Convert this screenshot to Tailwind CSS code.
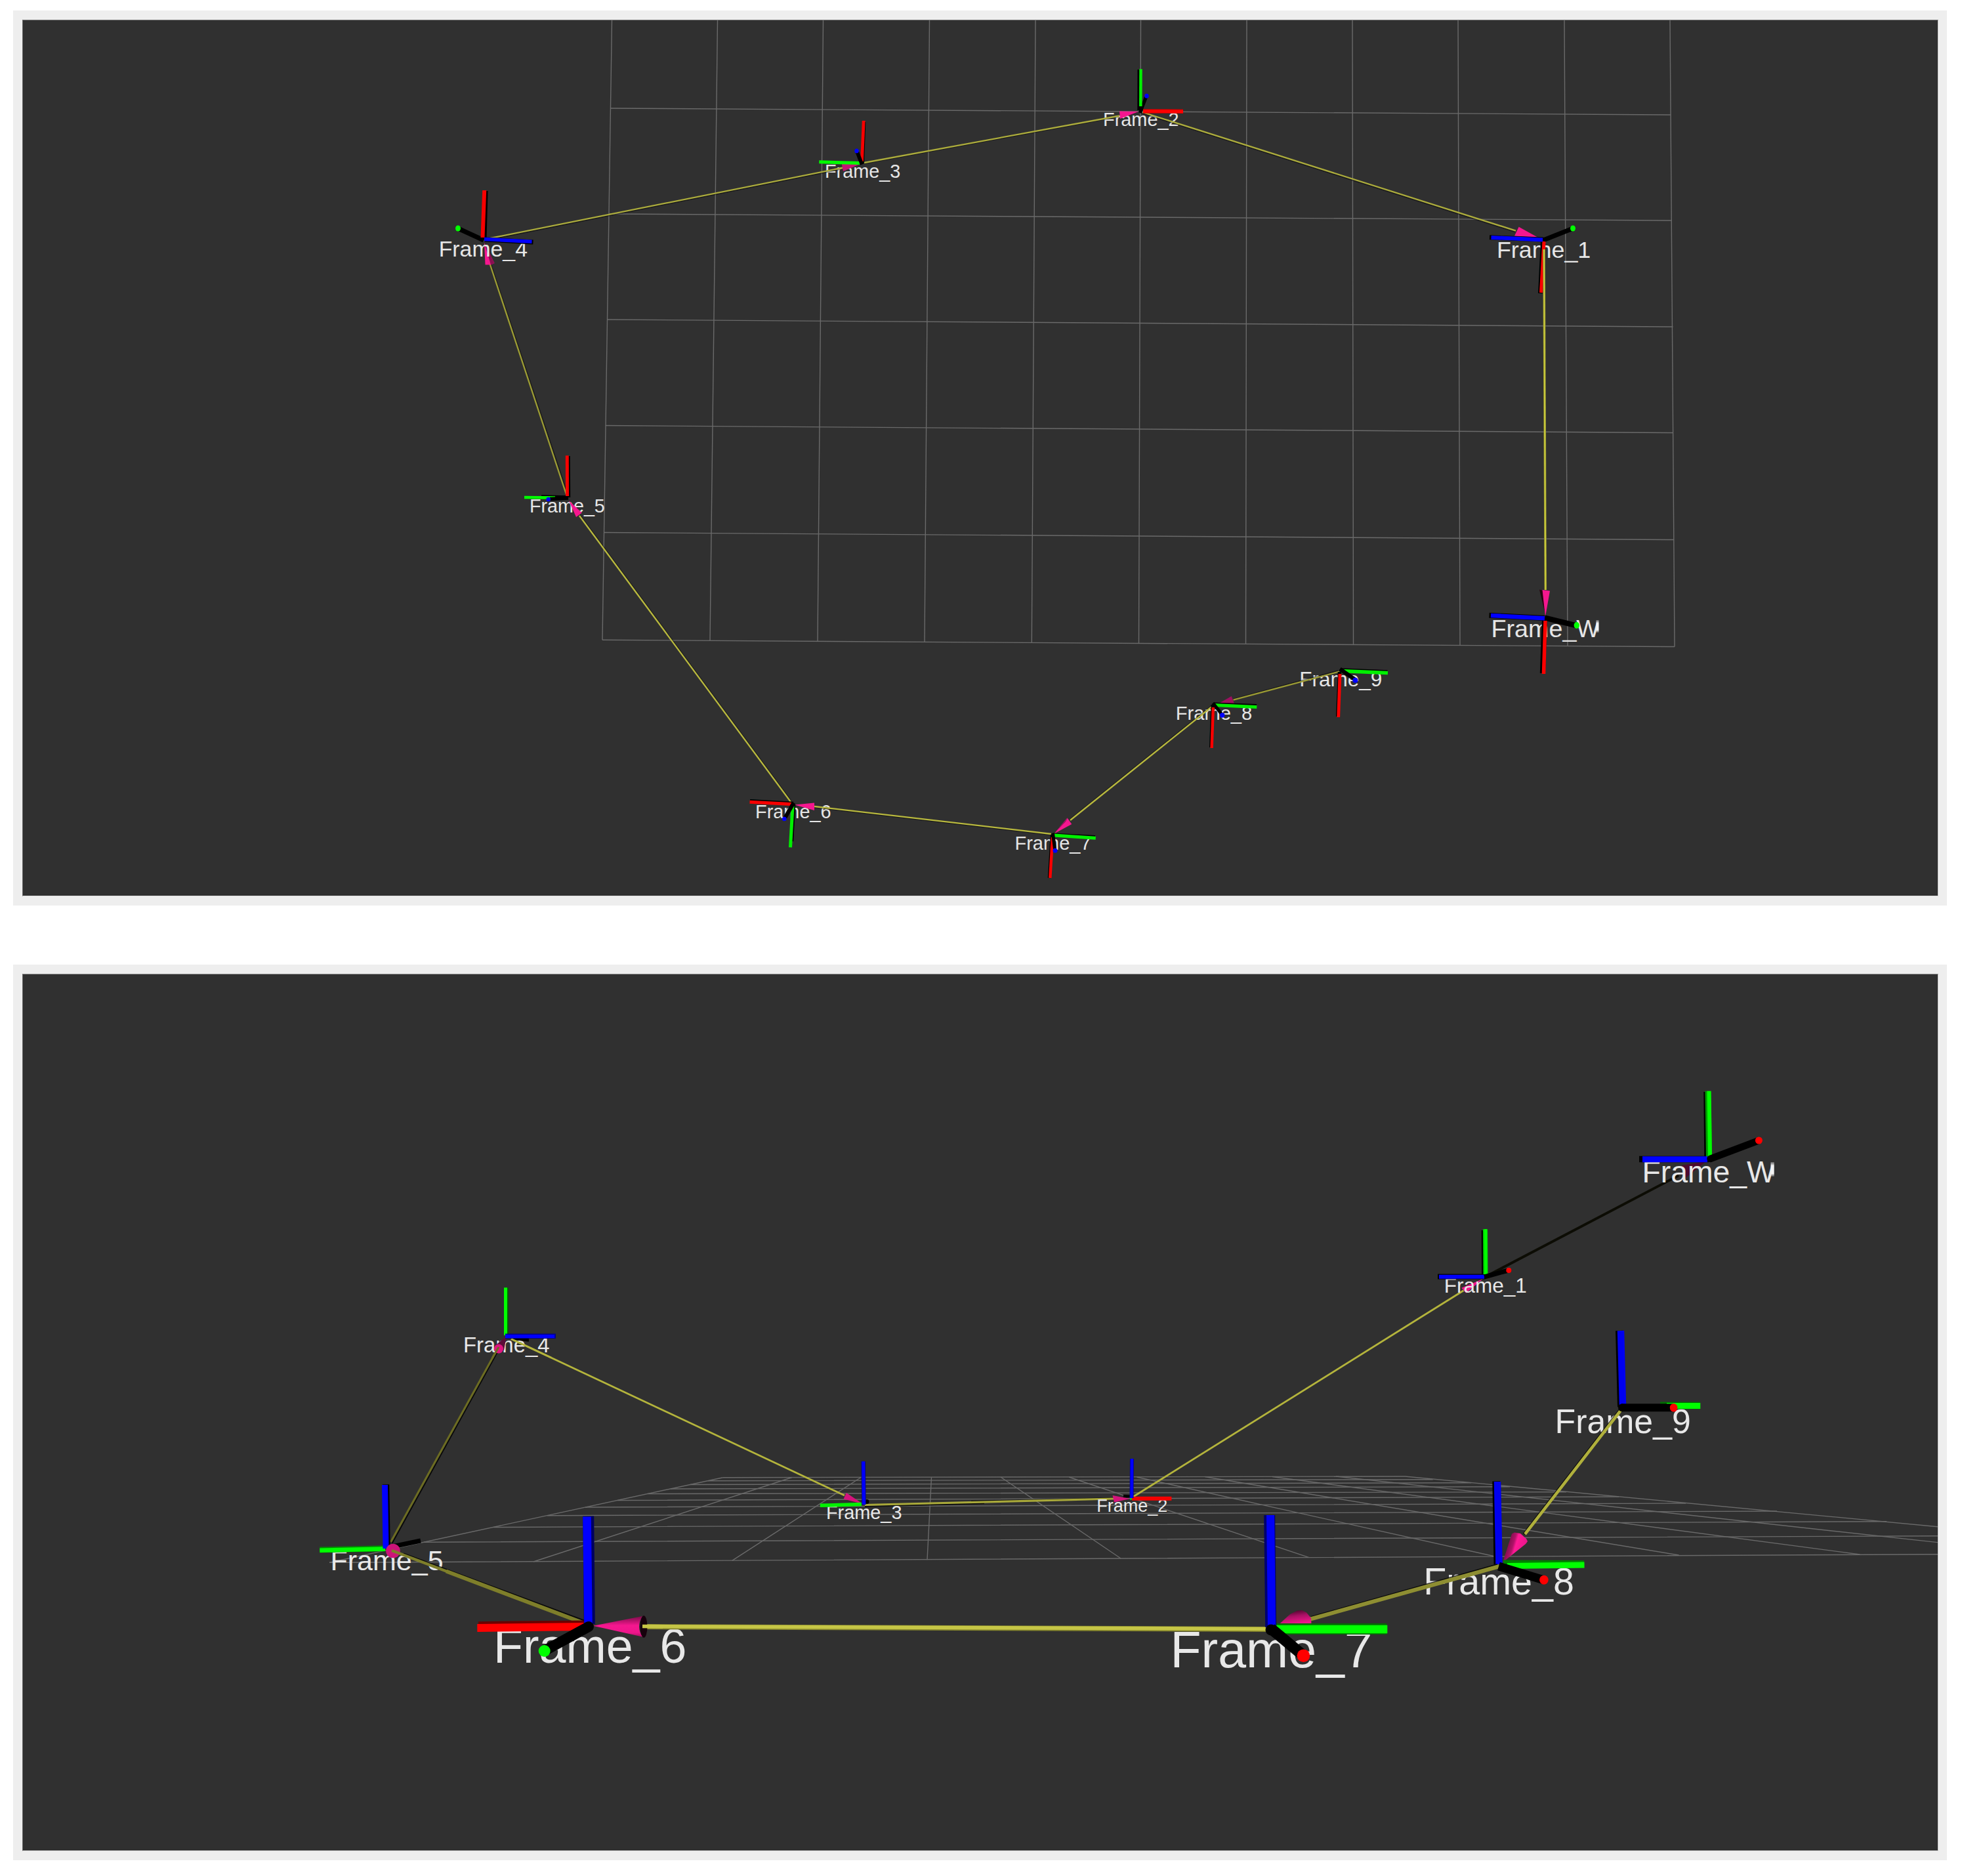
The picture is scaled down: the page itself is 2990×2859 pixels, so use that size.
<!DOCTYPE html>
<html lang="en">
<head>
  <meta charset="UTF-8" />
  <meta name="viewport" content="width=device-width, initial-scale=1.0"/>
  <title>TF Frames</title>
  <script src="https://cdn.jsdelivr.net/npm/@tailwindcss/browser@4"></script>
</head>
<body class="bg-white min-h-screen flex flex-col gap-[90px] pt-4 pl-5">

  <!-- Top view -->
  <section class="w-[2947px] bg-[#eeeeee] pl-[14px] pr-[13px] py-[14px]">
    <div class="h-[1336px] border border-t-[#7c7c7c] border-l-[#666666] border-r-[#cccccc] border-b-[#dedede] bg-[#303030] overflow-hidden">
      <svg viewBox="35 31 2918 1334" class="block w-[2918px] h-[1334px] fill-none font-['Liberation_Sans',Arial,sans-serif]">
        <defs>
          <linearGradient id="edgeFade" x1="0" y1="0" x2="0" y2="1">
            <stop offset="0" stop-color="#e8e8e8" stop-opacity=".3"/>
            <stop offset=".25" stop-color="#f4f4f4"/>
            <stop offset=".8" stop-color="#f4f4f4"/>
            <stop offset="1" stop-color="#e8e8e8" stop-opacity=".2"/>
          </linearGradient>
          <clipPath id="clipTopW"><path d="M2260 930H2433V990H2260Z"/></clipPath>
        </defs>

        <!-- Grid -->
        <g class="stroke-[#6a6a6a]" stroke-width="1.4">
          <path d="M932.5 31L918 975.3M1093.500 31L1082 976.5M1254.500 31L1246 977.500M1416.500 31L1409 978.500M1578 31L1572.300 979.500M1738.500 31L1735.500 980.500M1900 31L1898.500 981.500M2061 31L2062.500 982.500M2222 31L2225 983.500M2384 31L2389 984.500M2545 31L2552 985.5"/>
          <path d="M930.500 165L2546 175M928.500 326L2548 336M926 487L2549.500 498M923 648.500L2550 659.500M921 811.500L2551 822.500M918 975.3L2552 985.5"/>
        </g>

        <!-- Labels -->
        <g class="fill-[#e6e6e6]">
          <text x="2281" y="392.5" font-size="35.8">Frame_1</text>
          <text x="1681" y="191.5" font-size="28.9">Frame_2</text>
          <text x="1257" y="270.8" font-size="28.8">Frame_3</text>
          <text x="807" y="781" font-size="28.7">Frame_5</text>
          <text x="1151" y="1246.8" font-size="28.9">Frame_6</text>
          <text x="1546.5" y="1294.5" font-size="29">Frame_7</text>
          <text x="1791.8" y="1096.5" font-size="29.1">Frame_8</text>
          <text x="1980.2" y="1045.5" font-size="31.5">Frame_9</text>
          <text x="2272.5" y="970.5" font-size="37.7" clip-path="url(#clipTopW)">Frame_W</text>
        </g>
        <path fill="url(#edgeFade)" d="M2432.500 945H2436.500V964H2432.500Z"/>

        <!-- Links -->
        <g class="stroke-black" stroke-width="1.600" opacity=".45">
          <path d="M745 365.500L1284 257.500M1317 249.500L1705 178M1741 173L2309 353.500M866.500 757L748 402M1206 1221L884 785M1602 1272.500L1241 1230.500M1847 1075L1630 1249M2039 1022L1879 1065.500"/>
        </g>
        <g class="stroke-[#b8b83e]" stroke-width="2.3">
          <path class="stroke-[#acac3c]" d="M745 363.500L1285 255.500M1317 248L1706 176.500M1741 171L2310 351.700"/>
          <path class="stroke-[#9c9c34]" d="M864.500 758L746.500 402M2041 1023.500L1879.500 1066.700"/>
          <path d="M1205 1222L883 786M1602 1271L1241 1229M1848 1076L1631 1250"/>
        </g>

        <!-- Arrow heads -->
        <g class="fill-[#d4147c]">
          <path class="fill-[#f5178f]" d="M738 370L739.500 403.500L748 403.500L753.500 401Z"/>
          <path class="fill-[#8a0f52]" d="M738 370L748 403.500L753.500 401Z"/>
          <path class="fill-[#c41473]" d="M1311 250L1282.500 248.500L1285 261Z"/>
          <path class="fill-[#f5178f]" d="M1735 170L1706 169.500L1707 181Z"/>
          <path class="fill-[#f5178f]" d="M2344 362L2314.600 345.700L2308 359.500Z"/>
          <path class="fill-[#26040f]" d="M2355 937L2346 898.500L2351 900Z"/>
          <path class="fill-[#f5178f]" d="M2355 940L2350.500 899L2362 900.500Z"/>
          <path class="fill-[#f5178f]" d="M867 763L878 788L886.800 781.400Z"/>
          <path class="fill-[#f5178f]" d="M1211 1226.500L1241 1223.500L1241 1235Z"/>
          <path class="fill-[#f5178f]" d="M1606.500 1270.500L1626.500 1246.500L1633.300 1256Z"/>
          <path class="fill-[#8a0f52]" d="M1606.500 1270.500L1624 1252L1627.500 1246Z"/>
          <path class="fill-[#9c1060]" d="M1852 1075L1876.700 1061L1881 1072.300Z"/>
        </g>
        <text class="fill-[#e6e6e6]" x="668.7" y="390.9" font-size="33.8">Frame_4</text>

        <!-- Frame_4 axes -->
        <path class="stroke-black" stroke-width="7" d="M738 365L740 291M739 365L812.500 369M737 366L700 349"/>
        <path class="stroke-[#f60000]" stroke-width="6" d="M735.500 362L738.200 290"/>
        <path class="stroke-[#0000ff]" stroke-width="5.500" d="M738 364.500L810.500 368.300"/>
        <ellipse class="fill-[#00ff00]" cx="698" cy="348" rx="4" ry="4.500"/>

        <!-- Frame_3 axes -->
        <path class="stroke-black" stroke-width="5" d="M1314.500 249L1316.800 186M1313.500 250.500L1306.500 232"/>
        <path class="stroke-[#00ff00]" stroke-width="5" d="M1248.300 246.800L1310 248.500"/>
        <path class="stroke-[#f60000]" stroke-width="4.800" d="M1313.500 246L1316.200 184"/>
        <path class="stroke-black" stroke-width="5.500" d="M1313.500 250.500L1306.500 232"/>
        <ellipse class="fill-[#0000ff]" cx="1305.500" cy="230" rx="3.200" ry="3.500"/>

        <!-- Frame_2 axes -->
        <path class="stroke-[#c80000]" stroke-width="6.500" d="M1742 169.500L1803 169.700"/>
        <path class="stroke-[#ff0000]" stroke-width="4.500" d="M1742 169.500L1803 169.900"/>
        <path class="stroke-black" stroke-width="5" d="M1737.300 172L1746.500 148M1736 106L1735.800 168" />
        <path class="stroke-[#00f000]" stroke-width="4.500" d="M1738.500 105.300L1738.300 162"/>
        <ellipse class="fill-[#0000ff]" cx="1747.500" cy="146.300" rx="3.200" ry="3.500"/>

        <!-- Frame_1 axes -->
        <path class="stroke-black" stroke-width="7" d="M2270 361.800L2352 365M2352 366L2396 348.500M2351.500 366L2347.500 447"/>
        <path class="stroke-[#ff0000]" stroke-width="5" d="M2353 368L2348.500 446"/>
        <path class="stroke-[#0000ff]" stroke-width="6" d="M2272.500 362L2351 365.500"/>
        <ellipse class="fill-[#00ff00]" cx="2397" cy="348" rx="4" ry="4.500"/>
        <path class="stroke-[#8a8a2c]" stroke-width="3.600" d="M2353 380L2355.300 899"/>
        <path class="stroke-[#c8c83c]" stroke-width="2.200" d="M2353 380L2355.300 899"/>

        <!-- Frame_W axes -->
        <path class="stroke-black" stroke-width="8" d="M2269.500 937.800L2354 942M2354 941.500L2401 953M2354 942L2350.800 1026"/>
        <path class="stroke-[#ff0000]" stroke-width="5.500" d="M2355 946L2352.500 1027"/>
        <path class="stroke-[#0000ff]" stroke-width="6.500" d="M2272 938L2354 942.300"/>
        <ellipse class="fill-[#00ff00]" cx="2402.800" cy="953" rx="4.200" ry="5"/>

        <!-- Frame_5 axes -->
        <path class="stroke-black" stroke-width="5.500" d="M866.500 758L866 695M825 757L866 758"/>
        <path class="stroke-[#00ff00]" stroke-width="4.500" d="M799 758L846 758.500"/>
        <path class="stroke-[#f60000]" stroke-width="5" d="M864.300 694.200L864.500 756"/>
        <path class="stroke-black" stroke-width="5.500" d="M838 760.500L866 759"/>
        <circle class="fill-[#0000ff]" cx="835.700" cy="761" r="3.300"/>

        <!-- Frame_6 axes -->
        <path class="stroke-black" stroke-width="5.500" d="M1143 1220.800L1209 1224.500M1209.500 1226L1206.500 1282"/>
        <path class="stroke-[#f60000]" stroke-width="5" d="M1142.500 1222.300L1206 1225.500"/>
        <path class="stroke-[#00f000]" stroke-width="5" d="M1208 1228L1204.500 1291.400"/>
        <path class="stroke-black" stroke-width="6" d="M1209.500 1223.500L1196.500 1246"/>
        <circle class="fill-[#0000ff]" cx="1195.300" cy="1248" r="3.300"/>

        <!-- Frame_7 axes -->
        <path class="stroke-black" stroke-width="5" d="M1604.500 1272L1669 1275.500M1603.300 1272L1599.300 1338"/>
        <path class="stroke-[#00f000]" stroke-width="5" d="M1606 1273L1669.800 1277.300"/>
        <path class="stroke-[#ff0000]" stroke-width="4.400" d="M1604 1276L1600.300 1338"/>
        <path class="stroke-black" stroke-width="5" d="M1604.500 1270L1607.500 1294"/>
        <circle class="fill-[#0000ff]" cx="1608" cy="1296.300" r="3.500"/>

        <!-- Frame_8 axes -->
        <path class="stroke-black" stroke-width="5" d="M1849 1073L1915 1075.500M1848 1074L1845.500 1139"/>
        <path class="stroke-[#00f000]" stroke-width="5" d="M1850 1074.500L1915.300 1077.500"/>
        <path class="stroke-[#ff0000]" stroke-width="4.400" d="M1848.800 1078L1846.600 1140"/>
        <path class="stroke-black" stroke-width="5" d="M1848.500 1071.500L1861.500 1088"/>
        <circle class="fill-[#0000ff]" cx="1862.700" cy="1090" r="3.700"/>

        <!-- Frame_9 axes -->
        <path class="stroke-black" stroke-width="5.500" d="M2043 1021L2114.500 1024M2041.500 1024L2038.700 1092"/>
        <path class="stroke-[#00f000]" stroke-width="5.500" d="M2044 1022.500L2115 1025.500"/>
        <path class="stroke-[#ff0000]" stroke-width="4.800" d="M2042 1027L2039.700 1093"/>
        <path class="stroke-black" stroke-width="6" d="M2042 1019.500L2064 1035"/>
        <circle class="fill-[#0000ff]" cx="2065.400" cy="1036.700" r="4"/>
      </svg>
    </div>
  </section>

  <!-- Side view -->
  <section class="w-[2947px] bg-[#eeeeee] pl-[14px] pr-[13px] py-[14px]">
    <div class="h-[1337px] border border-t-[#8c8c8c] border-l-[#666666] border-r-[#cccccc] border-b-[#cccccc] bg-[#303030] overflow-hidden">
      <svg viewBox="35 1485 2918 1335" class="block w-[2918px] h-[1335px] fill-none font-['Liberation_Sans',Arial,sans-serif]">
        <defs>
          <linearGradient id="cone" x1="0" y1="0" x2="0" y2="1">
            <stop offset="0" stop-color="#7a0c48"/>
            <stop offset=".45" stop-color="#f5178f"/>
            <stop offset=".8" stop-color="#ee168b"/>
            <stop offset="1" stop-color="#a81064"/>
          </linearGradient>
          <linearGradient id="coneSide" x1="0" y1="0" x2="1" y2=".35">
            <stop offset="0" stop-color="#3c0623"/>
            <stop offset=".5" stop-color="#b01268"/>
            <stop offset=".6" stop-color="#ff1a96"/>
            <stop offset="1" stop-color="#e8158a"/>
          </linearGradient>
          <linearGradient id="coneTop" x1="0" y1="0" x2=".3" y2="1">
            <stop offset="0" stop-color="#2a0418"/>
            <stop offset=".5" stop-color="#a81064"/>
            <stop offset="1" stop-color="#f0168c"/>
          </linearGradient>
          <clipPath id="clipSideW"><path d="M2490 1740H2699.500V1820H2490Z"/></clipPath>
        </defs>

        <!-- Grid -->
        <g class="stroke-[#6a6a6a]" stroke-width="1.4">
          <path d="M1101.700 2251.700L2141 2250M1079 2256.700L2183.600 2254.700M1052 2262.500L2242 2259.700M1022 2269L2301 2265.700M987 2276.500L2387 2273.700M941 2286.500L2467 2281M892 2297L2569 2291M834 2309.700L2708 2303M752 2327.500L2875 2318.700M646 2350.300L2953 2340.700M502 2381.300L2953 2368.700"/>
          <path d="M1101.700 2251.700L502 2381.300M1207 2251.500L813 2380M1312 2251.500L1115.700 2378.300M1419.500 2251.500L1413 2377.300M1525 2251L1708 2375M1629 2251L1995 2373.700M1732.500 2251L2276 2371.500M1836 2250.500L2558.600 2370M1939 2250.500L2834.500 2369M2036 2250L3111 2368M2141 2250L3380 2367"/>
        </g>

        <!-- Distant links -->
        <path class="stroke-black" stroke-width="2" d="M597.500 2352L760 2057M1318 2296L1500 2291M1480 2288L1697 2283" opacity=".8"/>
        <path class="stroke-[#6c6c22]" stroke-width="3" d="M595.500 2350L758 2056"/>
        <path class="stroke-[#b4b43c]" stroke-width="2.800" d="M779 2040.500L1287 2279M1727 2281L2230.400 1966.700"/>
        <path class="stroke-[#a8a83a]" stroke-width="3.200" d="M1318 2293.500L1697 2284"/>
        <path class="stroke-[#0c0c04]" stroke-width="3.800" d="M2265 1945L2558 1791.500"/>

        <!-- Arrow heads behind labels -->
        <path class="fill-[#f0168c]" d="M2260 1949L2227.300 1962.700L2234.200 1970.500Z"/>
        <path class="fill-[#4c0a2e]" d="M2600 1770L2563 1776L2569 1795Z"/>

        <!-- Labels -->
        <g class="fill-[#e8e8e8]">
          <text x="2200.8" y="1969.5" font-size="31.5">Frame_1</text>
          <text x="1671.3" y="2304" font-size="27">Frame_2</text>
          <text x="1258.9" y="2315" font-size="28.9">Frame_3</text>
          <text x="706" y="2061" font-size="32.9">Frame_4</text>
          <text x="503.5" y="2392.5" font-size="43">Frame_5</text>
          <text x="752" y="2533.8" font-size="73.6">Frame_6</text>
          <text x="1783.5" y="2541.3" font-size="77">Frame_7</text>
          <text x="2169.2" y="2429.7" font-size="57.4">Frame_8</text>
          <text x="2369.5" y="2184" font-size="51.8">Frame_9</text>
          <text x="2502.5" y="1801.7" font-size="46.3" clip-path="url(#clipSideW)">Frame_W</text>
        </g>
        <path fill="url(#edgeFade)" d="M2698.500 1771H2703.700V1793H2698.500Z"/>

        <!-- Frame_W axes -->
        <path class="stroke-black" stroke-width="9.500" d="M2498 1766.500L2604 1766.500M2601 1664L2602 1764"/>
        <path class="stroke-[#009c00]" stroke-width="9" d="M2603 1662.700L2604.500 1764"/>
        <path class="stroke-[#00ff00]" stroke-width="6" d="M2604.500 1662.700L2606 1764"/>
        <path class="stroke-[#0000ff]" stroke-width="9" d="M2503 1766.700L2602 1766.700"/>
        <path class="stroke-black" stroke-width="10.500" stroke-linecap="round" d="M2606.500 1766L2678 1739"/>
        <circle class="fill-[#ff0000]" cx="2680.400" cy="1738" r="5.500"/>

        <!-- Frame_1 axes -->
        <path class="stroke-black" stroke-width="7.800" d="M2191 1945.500L2263 1945.500M2261.500 1875L2262 1943"/>
        <path class="stroke-[#00d800]" stroke-width="7" d="M2263.500 1873.300L2264 1942"/>
        <path class="stroke-[#00ff00]" stroke-width="4" d="M2264 1873.300L2264.500 1942"/>
        <path class="stroke-[#0000ff]" stroke-width="6" d="M2193 1945.700L2262 1945.700"/>
        <path class="stroke-black" stroke-width="7" d="M2262 1946L2297 1936.500"/>
        <circle class="fill-[#ff0000]" cx="2299.300" cy="1936" r="4"/>

        <!-- Frame_4 axes -->
        <path class="stroke-black" stroke-width="4.500" d="M782 2039.500L806 2042.500"/>
        <path class="stroke-[#b4b43c]" stroke-width="2.800" d="M779 2040.500L840 2069"/>
        <path class="fill-[#5c0c38]" d="M772 2036L753 2052L768 2058Z"/>
        <circle class="fill-[#e0157f]" cx="760" cy="2055.500" r="7"/>
        <path class="stroke-[#6c6c22]" stroke-width="3" d="M750 2070L760 2053"/>
        <path class="stroke-[#006000]" stroke-width="7" d="M771.500 1962.300L771.500 2035"/>
        <path class="stroke-[#00ff00]" stroke-width="5" d="M770.500 1962.300L770.500 2035"/>
        <path class="stroke-[#00008c]" stroke-width="7.500" d="M770 2036.300L847 2036.300"/>
        <path class="stroke-[#0000ff]" stroke-width="5" d="M770 2036.500L845 2036.500"/>

        <!-- Frame_3 axes -->
        <path class="fill-[#d4147c]" d="M1315 2292L1289.800 2275L1285.500 2284.500Z"/>
        <circle class="fill-black" cx="1321" cy="2288.500" r="3.500"/>
        <path class="stroke-[#00f000]" stroke-width="5.500" d="M1249.800 2294.300L1313 2292.500"/>
        <path class="stroke-[#00009c]" stroke-width="6.500" d="M1315.700 2227.300L1316.500 2293"/>
        <path class="stroke-[#0000ff]" stroke-width="4.500" d="M1315.700 2227.300L1316.500 2293"/>

        <!-- Frame_2 axes -->
        <path class="stroke-black" stroke-width="4" d="M1712 2280L1722 2280.500"/>
        <path class="fill-[#d4147c]" d="M1722 2284L1695.500 2279L1698 2289.500Z"/>
        <path class="stroke-[#f60000]" stroke-width="6" d="M1725 2283.700L1785.400 2283.700"/>
        <path class="stroke-[#00009c]" stroke-width="6" d="M1725 2223.300L1724.500 2283"/>
        <path class="stroke-[#0000ff]" stroke-width="4" d="M1725 2223.300L1724.500 2283"/>
        <circle class="fill-[#00e000]" cx="1723.500" cy="2284.500" r="1.500"/>

        <!-- Frame_5 axes -->
        <path class="stroke-black" stroke-width="7" d="M598 2357L641 2348"/>
        <path class="stroke-[#008c00]" stroke-width="9" d="M487.300 2362L587 2359.800"/>
        <path class="stroke-[#00ff00]" stroke-width="6.500" d="M487.300 2362.700L587 2360.500"/>
        <path class="stroke-black" stroke-width="10.500" d="M588 2262.300L589.500 2355"/>
        <path class="stroke-[#0000ff]" stroke-width="9" d="M586.500 2263L588 2360"/>
        <circle class="fill-[#cc1478]" cx="599" cy="2363.500" r="10.800"/>

        <!-- Link to Frame_5 -->
        <path class="stroke-black" stroke-width="2" d="M615 2367.500L890 2469.500" opacity=".8"/>
        <path class="stroke-[#7e7e2a]" stroke-width="4.500" d="M597 2363L700 2402"/>
        <path class="stroke-[#7e7e2a]" stroke-width="6" d="M680 2394.500L888 2473"/>

        <!-- Frame_9 axes and link -->
        <path class="stroke-black" stroke-width="3.500" d="M2469 2148L2322 2338" opacity=".8"/>
        <path class="stroke-[#b0b03c]" stroke-width="4.500" d="M2471 2148L2324 2338"/>
        <path class="stroke-[#006c00]" stroke-width="11" d="M2530 2142L2591 2142"/>
        <path class="stroke-[#00ff00]" stroke-width="9" d="M2540 2142.500L2591.300 2142.500"/>
        <path class="stroke-black" stroke-width="12" d="M2468 2028L2471 2144"/>
        <path class="stroke-[#0000f0]" stroke-width="10.500" d="M2470 2028L2473 2143"/>
        <path class="stroke-black" stroke-width="12" d="M2471 2145.300L2550 2145.300"/>
        <circle class="fill-black" cx="2472" cy="2145.300" r="6"/>
        <ellipse class="fill-[#ff0000]" cx="2550.600" cy="2145.300" rx="5.800" ry="6.300"/>

        <!-- Frame_8 axes and link -->
        <path fill="url(#coneSide)" d="M2290 2381L2304 2337.500L2308 2335.500L2317 2337L2326 2345L2328 2349L2325 2353Z"/>
        <path class="stroke-[#008000]" stroke-width="11" d="M2291 2383L2414 2383.500"/>
        <path class="stroke-[#00ff00]" stroke-width="9" d="M2297 2386.500L2414.500 2385"/>
        <path class="stroke-black" stroke-width="12" d="M2280.300 2257.300L2282.500 2384"/>
        <path class="stroke-[#0000f0]" stroke-width="10.500" d="M2282 2258L2284.500 2384"/>
        <path class="stroke-black" stroke-width="2" d="M2282 2384L1998 2464" opacity=".8"/>
        <path class="stroke-[#8e8e32]" stroke-width="6" d="M2285 2387L1997 2467.500"/>
        <path class="stroke-black" stroke-width="13" d="M2284 2387L2352 2407.700"/>
        <ellipse class="fill-[#ff0000]" cx="2352.900" cy="2407.700" rx="6.800" ry="7"/>

        <!-- Frame_7 axes and link -->
        <path class="stroke-[#85852c]" stroke-width="8" d="M979 2479L1932 2483"/>
        <path class="stroke-[#c6c646]" stroke-width="5.500" d="M979 2478.500L1932 2482.500"/>
        <path fill="url(#coneTop)" d="M1948.600 2476L1966 2460L1977 2454.500L1984 2454L1991 2457.500L1998 2466L1998.500 2475Z"/>
        <path class="stroke-[#006c00]" stroke-width="17" d="M1942 2482.500L2113 2482.500"/>
        <path class="stroke-[#00ff00]" stroke-width="12.500" d="M1942 2483L2114.300 2483"/>
        <path class="stroke-[#000070]" stroke-width="17" d="M1934.700 2309L1936.700 2480"/>
        <path class="stroke-[#0000f6]" stroke-width="12" d="M1936 2309L1938 2480"/>
        <path class="stroke-black" stroke-width="17" d="M1937 2482L1985 2522"/>
        <circle class="fill-black" cx="1937" cy="2484" r="8.500"/>
        <circle class="fill-[#ff0000]" cx="1986.400" cy="2523.300" r="9.800"/>

        <!-- Frame_6 axes -->
        <ellipse class="fill-[#16010c]" cx="981" cy="2479" rx="5.500" ry="16.800"/>
        <path fill="url(#cone)" d="M904 2477.700L979 2463Q969 2479 979 2494.500Z"/>
        <path class="stroke-[#c6c646]" stroke-width="5.500" d="M979 2478.500L1010 2478.700"/>
        <path class="stroke-[#6c0000]" stroke-width="15" d="M729 2478.700L893 2477"/>
        <path class="stroke-[#ff0000]" stroke-width="12" d="M727.300 2481L893 2479"/>
        <path class="stroke-[#000060]" stroke-width="17" d="M896.700 2310.700L898.300 2475"/>
        <path class="stroke-[#0000ff]" stroke-width="12.500" d="M894.500 2311.500L896.500 2475"/>
        <path class="stroke-black" stroke-width="16" stroke-linecap="round" d="M897 2479L833 2514"/>
        <circle class="fill-[#00ff00]" cx="829.700" cy="2516" r="9"/>
      </svg>
    </div>
  </section>

</body>
</html>
